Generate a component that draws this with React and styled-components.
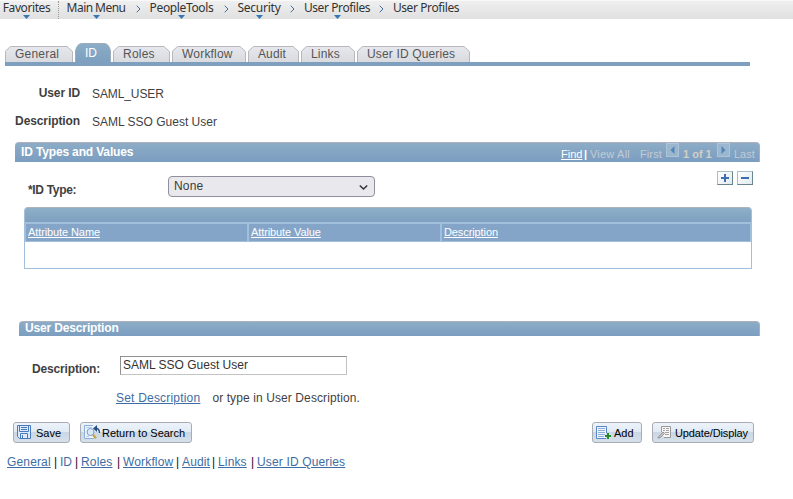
import React from "react";
import styled, { createGlobalStyle } from "styled-components";

const Global = createGlobalStyle`
  * { box-sizing: border-box; }
  body { margin: 0; background: #fff; color: #3f3f3f; font: 12px/14px "Liberation Sans", Arial, sans-serif; }
`;

const Page = styled.div`width: 793px; height: 499px; overflow: hidden;`;
const Text = styled.span`
  display: inline-block;
  white-space: pre;
  letter-spacing: ${p => p.$track || 0}px;
`;

/* breadcrumb */
const Crumbs = styled.nav`
  display: flex; height: 19px; padding-left: 3px;
  border-top: 1px solid #f8f8f8;
  background: linear-gradient(#efefef, #e0e0e0);
  font: 12px/14px "Noto Sans", Tahoma, sans-serif; color: #333;
`;
const Crumb = styled.div`
  width: ${p => p.$w}px; height: 18px; display: flex; flex-direction: column; align-items: center;
  letter-spacing: ${p => p.$track}px; white-space: nowrap;
  svg { display: block; }
`;
const Dots = styled.div`width: 1px; margin: 0 8px 0 8px; border-left: 1px dotted #999;`;
const Sep = styled.div`
  width: ${p => p.$w || 24}px; padding: 4px 0 0 ${p => p.$pad || 10}px;
  svg { display: block; }
`;
const Caret = () => <svg width="7" height="4"><path d="M0 0H7L3.5 4Z" fill="#3676b5" /></svg>;
const Chevron = () => <svg width="5" height="8"><path d="M.7 .7L4 4L.7 7.3" fill="none" stroke="#3d6fa3" /></svg>;

/* tabs */
const Tabs = styled.div`
  width: 745px; margin: 24px 0 0 5px; display: flex; gap: 2px; align-items: flex-end;
  height: 23px; border-bottom: 4px solid #7f9fbf;
`;
const TabBox = styled.div`
  width: ${p => p.$w}px; height: ${p => (p.$on ? 19 : 16)}px; display: grid;
  > * { grid-area: 1 / 1; }
  svg { display: block; }
`;
const TabLabel = styled.span`
  padding: ${p => (p.$on ? 3 : 1)}px 0 0 10px; white-space: pre;
  letter-spacing: ${p => p.$track}px; color: ${p => (p.$on ? "#fff" : "#555")};
`;
function Tab({ w, on, track, children }) {
  const h = on ? 19 : 16;
  const d = on
    ? `M.5 ${h + 1}V8Q2 .5 7 .5H${w - 7}Q${w - 2} .5 ${w - 0.5} 8V${h + 1}`
    : `M.5 ${h + 1}V5L5.5 .5H${w - 6}L${w - 0.5} 5.5V${h + 1}`;
  return (
    <TabBox $w={w} $on={on}>
      <svg width={w} height={h}>
        <defs>
          <linearGradient id="tabGrey" x2="0" y2="1"><stop stopColor="#e6e8ed" /><stop offset="1" stopColor="#d8dade" /></linearGradient>
          <linearGradient id="tabBlue" x2="0" y2="1"><stop stopColor="#8cadc7" /><stop offset="1" stopColor="#7c9fc0" /></linearGradient>
        </defs>
        <path d={d} fill={on ? "url(#tabBlue)" : "url(#tabGrey)"} stroke={on ? "#9bacba" : "#b8b8bb"} />
      </svg>
      <TabLabel $on={on} $track={track}>{children}</TabLabel>
    </TabBox>
  );
}

/* read-only fields */
const Fields = styled.div`
  height: 76px; padding-top: 20px; display: grid; grid-template-columns: 80px 1fr; grid-template-rows: 28px 28px; column-gap: 12px;
`;
const FieldLabel = styled.b`text-align: right; letter-spacing: -.1px; white-space: nowrap;`;
const FieldValue = styled.span`padding-top: 1px; letter-spacing: ${p => p.$track || 0}px;`;

/* sections */
const SectionBar = styled.header`
  display: flex; justify-content: space-between;
  height: ${p => p.$h}px; width: ${p => 760 - p.$x}px; margin-left: ${p => p.$x}px;
  padding: ${p => p.$pad}px 4px 0 6px; color: #fff;
  background: linear-gradient(#8cacc6, #7b9dc0);
  border-top: 1px solid #b0b0bb; border-right: 1px solid #a5b0c0; border-radius: 4px 4px 0 0;
`;
const SectionTitle = styled.b`letter-spacing: -.15px; margin-top: ${p => p.$up || 0}px;`;
const Pager = styled.div`display: flex; font-size: 11px; line-height: 13px; padding-top: 3px; color: #c2cbd4; white-space: pre;`;
const Find = styled.a`color: #fff; text-decoration: underline; width: 20px;`;
const PagerItem = styled.span`width: ${p => p.$w}px; letter-spacing: ${p => p.$track || 0}px; font-weight: ${p => (p.$bold ? 700 : 400)}; color: ${p => p.$color || "inherit"};`;
const Arrow = styled.span`
  width: 13px; height: 14px; margin: -5px ${p => p.$after}px 0 0; background: #9bb7d0; border: 1px solid #adc3d8;
  svg { display: block; }
`;

const IdRow = styled.div`display: flex; height: 45px; padding-left: 28px;`;
const IdLabel = styled.b`width: 140px; padding-top: 21px; font-size: 12px; letter-spacing: -.33px;`;
const Select = styled.div`
  width: 207px; height: 21px; margin-top: 14px; padding: 2px 6px 0 5px; display: flex; justify-content: space-between;
  border: 1px solid #8f8f9d; border-radius: 4px; background: #e9e9ed; color: #3b3b3b; letter-spacing: .2px;
`;
const RowTools = styled.div`display: flex; gap: 4px; margin: 9px 0 0 342px;`;
const SquareButton = styled.button`
  width: 16px; height: 14px; padding: 0; background: linear-gradient(135deg, #fff, #e2eaee);
  border: 1px solid #66858d; border-top-color: #a9c0c7; border-left-color: #a9c0c7;
  svg { display: block; }
`;

const Grid = styled.div`width: 728px; height: 62px; margin-left: 24px; border: 1px solid #a3bfdb; border-top: 0; border-radius: 4px 4px 0 0; overflow: hidden;`;
const GridCap = styled.div`height: 15px; background: linear-gradient(#8eafc6, #7fa0c0); border-top: 1px solid #acb3bd;`;
const GridHead = styled.div`
  display: grid; grid-template-columns: 221px 191px 308px; gap: 2px; height: 20px; padding: 2px 1px 1px; background: #a2bfdc;
`;
const HeadCell = styled.a`
  background: #84a5c8; color: #fff; text-decoration: underline; font-size: 11px; line-height: 12px; padding: 2px 0 0 2px;
  letter-spacing: -.1px;
`;

const DescSection = styled.section`padding-top: 52px;`;
const DescRow = styled.div`display: flex; height: 39px; padding: 20px 0 0 32px;`;
const DescLabel = styled.b`width: 88px; padding-top: 6px; letter-spacing: -.16px;`;
const Input = styled.div`
  width: 227px; height: 19px; padding: 1px 0 0 2px; border: 1px solid #c3c3c3; border-top-color: #919191; border-left-color: #919191;
  color: #333;
`;
const Hint = styled.div`display: flex; gap: 12px; padding: 16px 0 0 116px; height: 47px;`;
const Link = styled.a`color: #3e6da3; text-decoration: ${p => (p.$plain ? "none" : "underline")}; letter-spacing: ${p => p.$track || 0}px;`;

/* footer */
const Toolbar = styled.div`display: flex; gap: 10px; padding-left: 13px; height: 21px;`;
const ToolButton = styled.button`
  width: ${p => p.$w}px; height: 21px; margin-left: ${p => p.$push || 0}px; padding: 0 0 0 ${p => p.$pad || 3}px;
  display: flex; align-items: center; gap: ${p => p.$gap}px; white-space: nowrap;
  font: 11px/14px "Liberation Sans", Arial, sans-serif; color: #000; letter-spacing: ${p => p.$track || 0}px;
  border: 1px solid #a9adb3; border-radius: 3px;
  background: linear-gradient(#edf3fa 0, #e1eaf4 45%, #cbd7e4 50%, #d5e0eb 100%);
  svg { display: block; flex: none; }
`;
const FooterLinks = styled.div`display: flex; padding: 12px 0 0 7px; white-space: pre;`;
const Bar = styled.span`width: 9px; text-align: center; color: #300030;`;
const FootCell = styled.span`width: ${p => p.$w}px;`;

const SaveIcon = () => (
  <svg width="15" height="15" fill="none" stroke="#4a78bd">
    <path d="M.5.5H13.5V13.5H2.5L.5 11.5Z" fill="#dfeafa" />
    <path d="M2.5 1V6.5H11.5V1M3.5 13V8.5H10.5V13M4 2.5H10M4 4.5H10" /><path d="M5.5 10V13" />
  </svg>
);
const ReturnIcon = () => (
  <svg width="17" height="15" fill="none">
    <path d="M9 .5H.5V13.5H10" stroke="#8badd9" fill="#eef4fc" />
    <path d="M2 2.5H8M2 11.5H5" stroke="#b8cde9" />
    <circle cx="6.5" cy="7" r="3.5" stroke="#7b9ccc" fill="#d9e8f7" /><path d="M9 9.8L12 13.2" stroke="#c6a53a" strokeWidth="2.2" />
    <path d="M9 3.5L13 0V7Z" fill="#294d85" /><path d="M12 3.5Q15.5 3.5 15.5 8" stroke="#294d85" strokeWidth="1.3" />
  </svg>
);
const AddIcon = () => (
  <svg width="16" height="14" fill="none">
    <path d="M.5.5H10.5V12.5H.5Z" stroke="#5a85c5" fill="#eff5fd" /><path d="M2 2.5H9M2 4.5H9M2 6.5H9M2 8.5H9M2 10.5H8" stroke="#8facd9" />
    <path d="M12 7V13M9 10H15" stroke="#e3ebf4" strokeWidth="3.5" /><path d="M12 7V13M9 10H15" stroke="#218c27" strokeWidth="2" />
  </svg>
);
const UpdateIcon = () => (
  <svg width="15" height="13" fill="none">
    <path d="M4.5 6V.5H13.5V11.5H7" stroke="#999" fill="#f7f7f7" /><path d="M6 2.5H8M9 2.5H12M6 4.5H8M9 4.5H12M8 6.5H12M8 8.5H12" stroke="#a2a2a2" />
    <path d="M.8 11.8L6 6L7.5 7.3L3 11.8Z" fill="#ccc" stroke="#909090" />
  </svg>
);

const tabs = [
  ["General", 68, 0.22], ["ID", 36, -0.2, true], ["Roles", 57, 0.22], ["Workflow", 74, 0.2],
  ["Audit", 51, 0.1], ["Links", 54, 0.2], ["User ID Queries", 113, 0.15],
];
const pages = [["General", 44], ["ID", 12], ["Roles", 33], ["Workflow", 50], ["Audit", 27], ["Links", 30], ["User ID Queries", 89]];

export default function App() {
  return (
    <Page>
      <Global />
      <Crumbs>
        <Crumb $w={47} $track={-0.42}>Favorites<Caret /></Crumb>
        <Dots />
        <Crumb $w={58} $track={-0.55}>Main Menu<Caret /></Crumb>
        <Sep $pad={11}><Chevron /></Sep>
        <Crumb $w={65} $track={-0.35}>PeopleTools<Caret /></Crumb>
        <Sep $w={23}><Chevron /></Sep>
        <Crumb $w={44} $track={-0.25}>Security<Caret /></Crumb>
        <Sep $w={23} $pad={9}><Chevron /></Sep>
        <Crumb $w={66} $track={-0.4}>User Profiles<Caret /></Crumb>
        <Sep $w={23} $pad={9}><Chevron /></Sep>
        <Crumb $w={66} $track={-0.4}>User Profiles</Crumb>
      </Crumbs>
      <Tabs>
        {tabs.map(([name, w, track, on]) => <Tab key={name} w={w} track={track} on={on}>{name}</Tab>)}
      </Tabs>
      <Fields>
        <FieldLabel>User ID</FieldLabel><FieldValue $track={-0.1}>SAML_USER</FieldValue>
        <FieldLabel>Description</FieldLabel><FieldValue>SAML SSO Guest User</FieldValue>
      </Fields>
      <SectionBar $x={15} $h={20} $pad={2}>
        <SectionTitle>ID Types and Values</SectionTitle>
        <Pager>
          <Find>Find</Find>
          <PagerItem $w={9} $bold $color="#fff"> |</PagerItem>
          <PagerItem $w={50} $track={0.2}>View All</PagerItem>
          <PagerItem $w={26} $track={0.1}>First</PagerItem>
          <Arrow $after={4}><svg width="11" height="12"><path d="M7.5 2V10L3.5 6Z" fill="#5485b8" /></svg></Arrow>
          <PagerItem $w={34} $bold $color="#d2cfc9">1 of 1</PagerItem>
          <Arrow $after={4}><svg width="11" height="12"><path d="M3.5 2V10L7.5 6Z" fill="#5485b8" /></svg></Arrow>
          <PagerItem $w={21}>Last</PagerItem>
        </Pager>
      </SectionBar>
      <IdRow>
        <IdLabel>*ID Type:</IdLabel>
        <Select>None<svg width="9" height="18"><path d="M.8 6.5L4.5 10L8.2 6.5" fill="none" stroke="#333" strokeWidth="1.5" /></svg></Select>
        <RowTools>
          <SquareButton><svg width="14" height="12"><path d="M3 6H11M7 2V10" stroke="#3b6eb5" strokeWidth="2" /></svg></SquareButton>
          <SquareButton><svg width="14" height="12"><path d="M3 6H11" stroke="#3b6eb5" strokeWidth="2" /></svg></SquareButton>
        </RowTools>
      </IdRow>
      <Grid>
        <GridCap />
        <GridHead><HeadCell>Attribute Name</HeadCell><HeadCell>Attribute Value</HeadCell><HeadCell>Description</HeadCell></GridHead>
      </Grid>
      <DescSection>
        <SectionBar $x={19} $h={15} $pad={0}><SectionTitle $up={-1}>User Description</SectionTitle></SectionBar>
        <DescRow><DescLabel>Description:</DescLabel><Input>SAML SSO Guest User</Input></DescRow>
        <Hint><Link $track={0.2}>Set Description</Link><Text $track={0.1}>or type in User Description.</Text></Hint>
      </DescSection>
      <Toolbar>
        <ToolButton $w={57} $gap={4}><SaveIcon />Save</ToolButton>
        <ToolButton $w={112} $gap={1}><ReturnIcon />Return to Search</ToolButton>
        <ToolButton $w={50} $gap={2} $push={390}><AddIcon />Add</ToolButton>
        <ToolButton $w={102} $gap={3} $pad={4} $track={-0.12}><UpdateIcon />Update/Display</ToolButton>
      </Toolbar>
      <FooterLinks>
        {pages.map(([name, w], i) => (
          <React.Fragment key={name}>
            {i > 0 && <Bar>|</Bar>}
            <FootCell $w={w}><Link $plain={name === "ID"} $track={name === "ID" ? 0 : 0.15}>{name}</Link></FootCell>
          </React.Fragment>
        ))}
      </FooterLinks>
    </Page>
  );
}
